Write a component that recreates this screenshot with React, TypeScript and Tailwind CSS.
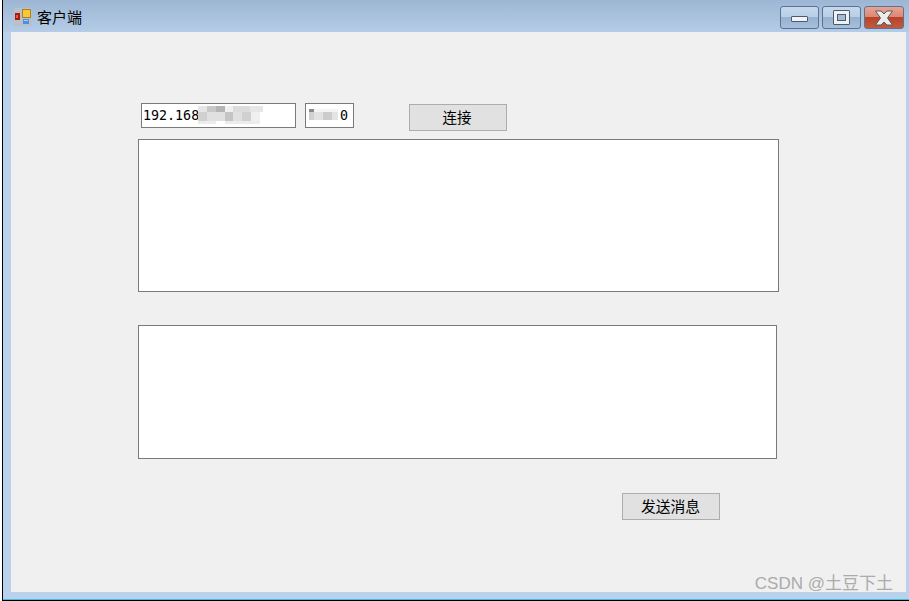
const font = "font-['Noto_Sans_CJK_SC','Liberation_Sans',sans-serif]";

function CaptionButton({ className, children }: { className: string; children: React.ReactNode }) {
  return (
    <div className={`relative flex h-[23px] items-center justify-center overflow-hidden rounded-[3px] border border-[#5d7290] ${className}`}>
      {children}
    </div>
  );
}

function Mosaic({ cells, className }: { cells: [number, number, number, number, string][]; className: string }) {
  return (
    <svg className={className} shapeRendering="crispEdges">
      {cells.map(([x, y, w, h, c], i) => (
        <rect key={i} x={x} y={y} width={w} height={h} fill={c} />
      ))}
    </svg>
  );
}

const ipCells: [number, number, number, number, string][] = [
  [0, 0, 9, 6, '#e6e6e6'], [9, 0, 9, 6, '#c8c8c8'], [18, 0, 9, 6, '#b4b4b4'], [27, 0, 8, 6, '#f0f0f0'], [35, 0, 17, 6, '#dcdcdc'], [52, 0, 13, 6, '#e6e6e6'],
  [0, 6, 9, 9, '#d0d0d0'], [9, 6, 18, 9, '#e0e0e0'], [27, 6, 8, 9, '#c4c4c4'], [35, 6, 9, 9, '#e0e0e0'], [44, 6, 9, 9, '#d0d0d0'], [53, 6, 9, 9, '#f0f0f0'],
  [0, 15, 18, 3, '#ececec'], [27, 15, 35, 3, '#ececec'],
];

const portCells: [number, number, number, number, string][] = [
  [0, 0, 5, 3, '#8a8a8a'], [5, 0, 24, 3, '#f4f4f4'],
  [0, 3, 5, 8, '#d0d0d0'], [5, 3, 9, 8, '#e2e2e2'], [14, 3, 9, 8, '#cccccc'], [23, 3, 6, 8, '#e4e4e4'],
];

export default function App() {
  return (
    <div className={`flex h-[601px] w-[909px] flex-col overflow-hidden bg-white pl-[2px] ${font}`}>
      <div className="flex flex-1 flex-col border-b border-l border-b-black border-l-black">
        {/* title bar */}
        <div className="flex h-[32px] items-start justify-between bg-gradient-to-b from-[#9db6d3] to-[#b4cce8] pl-[11px] pr-[5px]">
          <div className="flex items-center gap-[5px] pt-[8px]">
            <svg width="18" height="18" viewBox="0 0 18 18" shapeRendering="crispEdges">
              <rect width="18" height="18" fill="#b9c0ca" />
              <rect x="1" y="5" width="5" height="7" fill="#a81c10" />
              <rect x="2" y="7" width="2" height="3" fill="#e25a3c" />
              <rect x="8" y="1" width="9" height="9" fill="#a8801c" />
              <rect x="9" y="2" width="7" height="7" fill="#f8c838" />
              <rect x="9" y="11" width="6" height="5" fill="#4a90e0" />
              <rect x="10" y="12" width="4" height="1" fill="#a8d0f8" />
            </svg>
            <span className="text-[15px] leading-[18px] text-black">客户端</span>
          </div>
          <div className="flex gap-[3px] pt-[6px]">
            <CaptionButton className="w-[39px] bg-[linear-gradient(#c5d8ed_0%,#b8cfe8_48%,#97b1cf_50%,#a5bfdc_100%)]">
              <div className="mt-[3px] h-[6px] w-[17px] rounded-[1px] border border-[#4a5a70] bg-[#f0f2f5]" />
            </CaptionButton>
            <CaptionButton className="w-[39px] bg-[linear-gradient(#c5d8ed_0%,#b8cfe8_48%,#97b1cf_50%,#a5bfdc_100%)]">
              <div className="flex h-[15px] w-[17px] items-center justify-center rounded-[1px] border border-[#4a5a70] bg-[#eef0f3]">
                <div className="h-[7px] w-[9px] border border-[#4a5a70] bg-[#a3bbd6]" />
              </div>
            </CaptionButton>
            <CaptionButton className="w-[40px] border-[#5a1a26] bg-[linear-gradient(#e8a493_0%,#dc8672_48%,#b8432a_50%,#c25a3c_100%)]">
              <svg width="20" height="16" viewBox="0 0 20 16">
                <path d="M1.5 1h5.5l3 3 3-3h5.500l-5 7 5 7h-5.500l-3-3-3 3H1.500l5-7z" fill="#ececec" stroke="#5a5a5a" strokeWidth="1" />
              </svg>
            </CaptionButton>
          </div>
        </div>

        {/* frame */}
        <div className="flex flex-1 border-b border-b-[#39c0e0] bg-[#b9d1ea] pb-[7px] pl-[8px] pr-[3px]">
          {/* client area */}
          <div className="relative flex flex-1 flex-col bg-[#f0f0f0] pl-[127px] pt-[71px]">
            <div className="flex items-start pl-[3px]">
              <div className="relative h-[25px] w-[155px] border border-[#7a7a7a] bg-white pl-[1px] font-['DejaVu_Sans_Mono',monospace] text-[13.33px] leading-[23px] text-black">
                192.168
                <Mosaic cells={ipCells} className="absolute left-[56px] top-[2px] h-[18px] w-[65px]" />
              </div>
              <div className="relative ml-[9px] h-[25px] w-[49px] border border-[#7a7a7a] bg-white pr-[5px] text-right font-['DejaVu_Sans_Mono',monospace] text-[13.33px] leading-[23px] text-black">
                0
                <Mosaic cells={portCells} className="absolute left-[3px] top-[5px] h-[11px] w-[29px]" />
              </div>
              <button className="ml-[55px] mt-px h-[27px] w-[98px] border border-[#adadad] bg-[#e1e1e1] pb-[2px] pr-[2px] text-[14.5px] text-black">
                连接
              </button>
            </div>
            <div className="mt-[8px] h-[153px] w-[641px] border border-[#7a7a7a] bg-white" />
            <div className="mt-[33px] h-[134px] w-[639px] border border-[#7a7a7a] bg-white" />
            <button className="ml-[484px] mt-[34px] h-[27px] w-[98px] border border-[#adadad] bg-[#e1e1e1] pr-[1px] text-[14.8px] text-black">
              发送消息
            </button>
            <span className="absolute bottom-[-3px] right-[13px] font-['Liberation_Sans','Noto_Sans_CJK_SC',sans-serif] text-[17px] leading-[22px] text-[#ababab]">
              CSDN @土豆下土
            </span>
          </div>
        </div>
      </div>
    </div>
  );
}
